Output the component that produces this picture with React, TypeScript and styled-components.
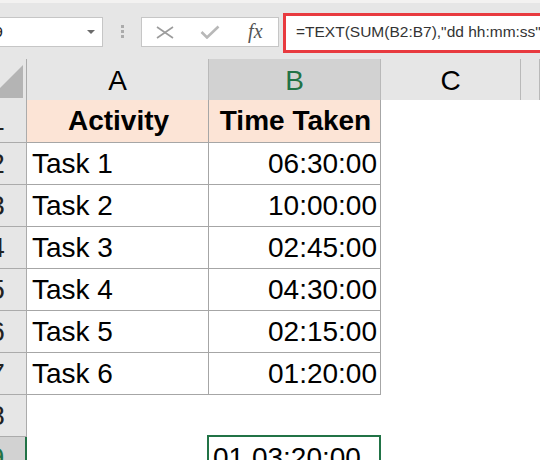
import styled, { createGlobalStyle } from "styled-components";

const GlobalStyle = createGlobalStyle`
  * { box-sizing: border-box; }
  html, body { margin: 0; padding: 0; background: #fff; overflow: hidden; }
  body { font-family: "Liberation Sans", Arial, sans-serif; }
`;

const Window = styled.div`
  width: 540px;
  height: 460px;
  overflow: hidden;
  background: #fff;
`;

const TopStrip = styled.div`
  height: 3px;
  background: #f3f2f1;
`;

const FormulaBar = styled.div`
  display: flex;
  align-items: flex-start;
  height: 56px;
  background: #e6e6e6;
`;

const NameBox = styled.div`
  margin: 14px 0 0 -40px;
  width: 143px;
  height: 30px;
  flex-shrink: 0;
  background: #fff;
  border: 1px solid #c6c6c6;
  display: flex;
  align-items: center;
  justify-content: space-between;
  padding: 0 7px 0 23px;
  font-size: 15.5px;
  color: #222;
`;

const DropArrow = styled.span`
  width: 0;
  height: 0;
  border-left: 4px solid transparent;
  border-right: 4px solid transparent;
  border-top: 4px solid #6a6a6a;
`;

const Grip = styled.div`
  margin: 22px 17px 0 18px;
  display: flex;
  flex-direction: column;
  gap: 2px;
  flex-shrink: 0;
`;

const GripDot = styled.span`
  width: 3px;
  height: 3px;
  background: #ababab;
`;

const ButtonBox = styled.div`
  margin-top: 14px;
  width: 138px;
  height: 30px;
  flex-shrink: 0;
  background: #fff;
  border: 1px solid #c6c6c6;
  display: grid;
  grid-template-columns: repeat(3, 1fr);
  place-items: center;
`;

const Fx = styled.span`
  font-family: "Liberation Serif", "DejaVu Serif", serif;
  font-style: italic;
  font-size: 20px;
  color: #555;
  line-height: 1;
  margin-top: -2px;
`;

const FormulaBox = styled.div`
  margin: 10px -20px 0 4px;
  flex: 1;
  height: 40px;
  background: #fff;
  border: 3px solid #e83a3f;
  display: flex;
  align-items: center;
  padding: 0 0 2px 10px;
  font-size: 15.5px;
  color: #333;
  white-space: nowrap;
  overflow: hidden;
`;

const Sheet = styled.div`
  margin-left: -32px;
  font-size: 28px;
  color: #000;
`;

const Row = styled.div<{ $h: number }>`
  display: grid;
  grid-template-columns: 59px 182px 172px 140px 1fr;
  height: ${(p) => p.$h}px;
`;

const Corner = styled.div`
  background: #e6e6e6;
  border-right: 1px solid #ababab;
  border-bottom: 1px solid #ababab;
  display: flex;
  justify-content: flex-end;
  align-items: flex-end;
  padding: 0 3px 3px 0;
`;

const CornerMark = styled.span`
  width: 33px;
  height: 33px;
  background: #b4b4b4;
  clip-path: polygon(100% 0, 100% 100%, 0 100%);
`;

const ColHead = styled.div<{ $sel?: boolean }>`
  background: ${(p) => (p.$sel ? "#d2d2d2" : "#e6e6e6")};
  color: ${(p) => (p.$sel ? "#217346" : "#000")};
  border-right: 1px solid #b9b9b9;
  border-bottom: ${(p) => (p.$sel ? "2px solid #217346" : "1px solid #ababab")};
  text-align: center;
  line-height: 38px;
  padding-top: 3px;
`;

const RowHead = styled.div<{ $sel?: boolean }>`
  background: ${(p) => (p.$sel ? "#d2d2d2" : "#e6e6e6")};
  color: ${(p) => (p.$sel ? "#217346" : "#222")};
  border-right: ${(p) => (p.$sel ? "2px solid #217346" : "1px solid #ababab")};
  border-bottom: 1px solid #ababab;
  text-align: center;
  line-height: 41px;
`;

const Cell = styled.div<{
  $align?: "left" | "right" | "center";
  $bold?: boolean;
  $fill?: string;
  $right?: boolean;
  $bottom?: boolean;
  $selected?: boolean;
}>`
  position: relative;
  background: ${(p) => p.$fill ?? "#fff"};
  font-weight: ${(p) => (p.$bold ? 700 : 400)};
  text-align: ${(p) => p.$align ?? "left"};
  border-right: 1px solid ${(p) => (p.$right ? "#a6a6a6" : "transparent")};
  border-bottom: 1px solid ${(p) => (p.$bottom ? "#a6a6a6" : "transparent")};
  padding: 0 3px 0 5px;
  line-height: 41px;
  white-space: nowrap;

  ${(p) =>
    p.$selected &&
    `
    padding-left: 4px;
    &::after {
      content: "";
      position: absolute;
      top: -2px;
      left: -2px;
      right: -1px;
      bottom: -30px;
      border: 2px solid #217346;
    }
  `}
`;

const tasks = [
  ["Task 1", "06:30:00"],
  ["Task 2", "10:00:00"],
  ["Task 3", "02:45:00"],
  ["Task 4", "04:30:00"],
  ["Task 5", "02:15:00"],
  ["Task 6", "01:20:00"],
];

export default function App() {
  return (
    <Window>
      <GlobalStyle />
      <TopStrip />
      <FormulaBar>
        <NameBox>
          <span>B9</span>
          <DropArrow />
        </NameBox>
        <Grip>
          <GripDot />
          <GripDot />
          <GripDot />
        </Grip>
        <ButtonBox>
          <svg width="18" height="13" viewBox="0 0 18 13">
            <path d="M1 1 L17 12 M17 1 L1 12" stroke="#9c9c9c" strokeWidth="1.6" fill="none" />
          </svg>
          <svg width="20" height="14" viewBox="0 0 20 14">
            <path d="M1.5 7 L7 12.5 L18.5 1.5" stroke="#b8b8b8" strokeWidth="2.6" fill="none" />
          </svg>
          <Fx>fx</Fx>
        </ButtonBox>
        <FormulaBox>=TEXT(SUM(B2:B7),"dd hh:mm:ss")</FormulaBox>
      </FormulaBar>

      <Sheet>
        <Row $h={41}>
          <Corner>
            <CornerMark />
          </Corner>
          <ColHead>A</ColHead>
          <ColHead $sel>B</ColHead>
          <ColHead>C</ColHead>
          <ColHead />
        </Row>
        <Row $h={43}>
          <RowHead>1</RowHead>
          <Cell $align="center" $bold $fill="#fce4d6" $right $bottom>
            Activity
          </Cell>
          <Cell $align="center" $bold $fill="#fce4d6" $right $bottom>
            Time Taken
          </Cell>
          <Cell />
          <Cell />
        </Row>
        {tasks.map(([name, time], i) => (
          <Row $h={42} key={name}>
            <RowHead>{i + 2}</RowHead>
            <Cell $right $bottom>
              {name}
            </Cell>
            <Cell $align="right" $right $bottom>
              {time}
            </Cell>
            <Cell />
            <Cell />
          </Row>
        ))}
        <Row $h={42}>
          <RowHead>8</RowHead>
          <Cell />
          <Cell />
          <Cell />
          <Cell />
        </Row>
        <Row $h={42}>
          <RowHead $sel>9</RowHead>
          <Cell />
          <Cell $selected>01 03:20:00</Cell>
          <Cell />
          <Cell />
        </Row>
      </Sheet>
    </Window>
  );
}
